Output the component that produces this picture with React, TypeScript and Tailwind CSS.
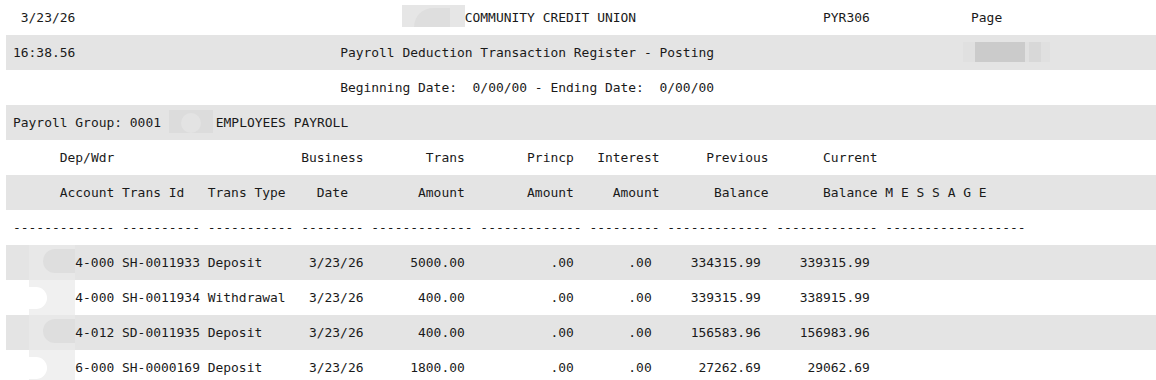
import clsx from 'clsx';
import type { ReactNode } from 'react';

type Cell = [number, string, 'r'?];

// build a fixed-column report line; 'r' cells are right aligned on their column
const line = (cells: Cell[]) => {
  let s = '';
  for (const [col, text, align] of cells) {
    const start = align === 'r' ? col - text.length + 1 : col;
    s = s.padEnd(start, ' ') + text;
  }
  return s;
};

const dashes = (n: number) => '-'.repeat(n);

interface Txn {
  account: string;
  id: string;
  type: string;
  date: string;
  amount: string;
  princp: string;
  interest: string;
  previous: string;
  current: string;
}

const txns: Txn[] = [
  { account: '4-000', id: 'SH-0011933', type: 'Deposit', date: '3/23/26', amount: '5000.00', princp: '.00', interest: '.00', previous: '334315.99', current: '339315.99' },
  { account: '4-000', id: 'SH-0011934', type: 'Withdrawal', date: '3/23/26', amount: '400.00', princp: '.00', interest: '.00', previous: '339315.99', current: '338915.99' },
  { account: '4-012', id: 'SD-0011935', type: 'Deposit', date: '3/23/26', amount: '400.00', princp: '.00', interest: '.00', previous: '156583.96', current: '156983.96' },
  { account: '6-000', id: 'SH-0000169', type: 'Deposit', date: '3/23/26', amount: '1800.00', princp: '.00', interest: '.00', previous: '27262.69', current: '29062.69' },
];

const Line = ({ shade, children }: { shade?: boolean; children: ReactNode }) => (
  <div className={clsx('h-[35px] pl-[7px] leading-[35px] whitespace-pre overflow-hidden', shade && 'bg-[#e4e4e4]')}>
    {children}
  </div>
);

// blurred-out member number beside each account
const Smudge = ({ shade }: { shade: boolean }) =>
  shade ? (
    <span className="inline-flex h-[35px] w-[6ch] align-top bg-[#e8e8e8]">
      <span className="mt-[4px] ml-[14px] h-[24px] w-[32px] rounded-l-full bg-[#dedede]" />
    </span>
  ) : (
    <span className="inline-flex h-[35px] w-[6ch] items-center align-top bg-[#f0f0f0]">
      <span className="h-[22px] w-[18px] rounded-r-full bg-white" />
    </span>
  );

export default function App() {
  const dashLine = line([
    [0, dashes(13)], [14, dashes(10)], [25, dashes(11)], [37, dashes(8)], [46, dashes(13)],
    [60, dashes(13)], [74, dashes(9)], [84, dashes(13)], [98, dashes(13)], [112, dashes(18)],
  ]);

  return (
    <div className="min-h-[380px] bg-white">
      <div className="ml-[6px] font-['DejaVu_Sans_Mono','Liberation_Mono',monospace] text-[12.95px] text-[#1a1a1a]">
        <Line>
          {line([[1, '3/23/26']]).padEnd(50, ' ')}
          <span className="mt-[5px] inline-flex h-[22px] w-[8ch] align-top bg-[#e6e6e6]">
            <span className="mt-[3px] ml-[12px] h-[19px] w-[36px] rounded-tl-full bg-[#dedede]" />
          </span>
          {line([[58, 'COMMUNITY CREDIT UNION'], [104, 'PYR306'], [123, 'Page']]).slice(58)}
        </Line>
        <Line shade>
          {line([[0, '16:38.56'], [42, 'Payroll Deduction Transaction Register - Posting']]).padEnd(122, ' ')}
          <span className="mt-[7px] inline-flex h-[20px] w-[87px] align-top bg-[#e0e0e0]">
            <span className="ml-[12px] h-[20px] w-[50px] bg-[#cbcbcb]" />
            <span className="ml-[4px] h-[20px] w-[12px] bg-[#d8d8d8]" />
          </span>
        </Line>
        <Line>{line([[42, 'Beginning Date:  0/00/00 - Ending Date:  0/00/00']])}</Line>
        <Line shade>
          {'Payroll Group: 0001 '}
          <span className="mt-[5px] mr-[3px] inline-flex h-[23px] w-[44px] align-top bg-[#dcdcdc]">
            <span className="mt-[3px] ml-[12px] h-[20px] w-[20px] rounded-full bg-[#e3e3e3]" />
          </span>
          EMPLOYEES PAYROLL
        </Line>
        <Line>
          {line([[6, 'Dep/Wdr'], [37, 'Business'], [53, 'Trans'], [66, 'Princp'], [75, 'Interest'], [89, 'Previous'], [104, 'Current']])}
        </Line>
        <Line shade>
          {line([[6, 'Account'], [14, 'Trans Id'], [25, 'Trans Type'], [39, 'Date'], [52, 'Amount'], [66, 'Amount'], [77, 'Amount'], [90, 'Balance'], [104, 'Balance M E S S A G E']])}
        </Line>
        <Line>{dashLine}</Line>
        {txns.map((t, i) => {
          const shade = i % 2 === 0;
          const text = line([
            [8, t.account], [14, t.id], [25, t.type], [38, t.date], [57, t.amount, 'r'],
            [71, t.princp, 'r'], [81, t.interest, 'r'], [95, t.previous, 'r'], [109, t.current, 'r'],
          ]);
          return (
            <Line key={t.id} shade={shade}>
              {'  '}
              <Smudge shade={shade} />
              {text.slice(8)}
            </Line>
          );
        })}
      </div>
    </div>
  );
}
